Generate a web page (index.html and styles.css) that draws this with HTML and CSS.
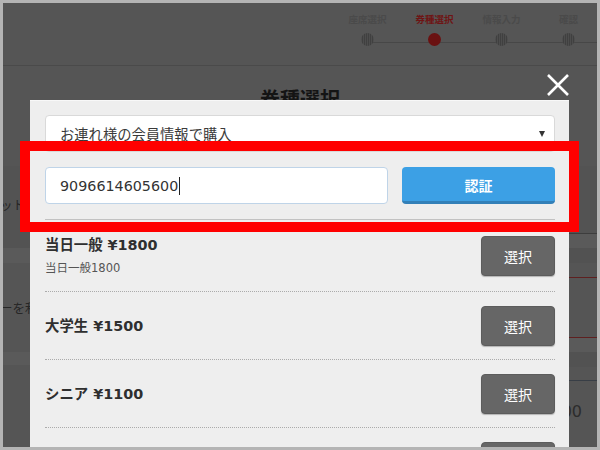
FILE: index.html
```html
<!DOCTYPE html>
<html lang="ja">
<head>
<meta charset="utf-8">
<title>券種選択</title>
<link rel="stylesheet" href="styles.css">
</head>
<body>
<div class="frame">
  <header class="steps-bar">
    <ol class="steps">
      <li class="step"><span class="step-label">座席選択</span><span class="dot"></span></li>
      <li class="step active"><span class="step-label">券種選択</span><span class="dot"></span></li>
      <li class="step"><span class="step-label">情報入力</span><span class="dot"></span></li>
      <li class="step"><span class="step-label">確認</span><span class="dot"></span></li>
    </ol>
  </header>
  <h1 class="page-title">券種選択</h1>
  <div class="page-body">
    <div class="col col-left">
      <div class="blk gap"></div>
      <div class="blk l-row1"><span class="bg-text">ットの選択</span></div>
      <div class="blk band-light l-band"></div>
      <div class="blk l-row2"><span class="bg-text">ーを利用</span></div>
      <div class="blk band-light l-band2"></div>
    </div>
    <div class="col col-right">
      <div class="blk gap"></div>
      <div class="blk r-a"></div>
      <div class="blk band-light r-b"></div>
      <div class="blk band-dark r-c"></div>
      <div class="blk r-d"></div>
      <div class="blk r-e"></div>
      <div class="blk band-light r-b"></div>
      <div class="blk band-dark r-c"></div>
      <div class="blk r-f"></div>
      <div class="blk r-g"><span class="bg-price">00</span></div>
    </div>
  </div>

  <div class="modal">
    <div class="select">
      <span>お連れ様の会員情報で購入</span>
      <span class="arrow"></span>
    </div>
    <div class="auth-row">
      <div class="input">9096614605600<span class="caret"></span></div>
      <button class="auth-btn">認証</button>
    </div>
    <div class="sep"></div>
    <ul class="tickets">
      <li class="ticket">
        <div class="ticket-info first">
          <div class="ticket-name">当日一般 ¥1800</div>
          <div class="ticket-desc">当日一般1800</div>
        </div>
        <button class="pick">選択</button>
      </li>
      <li class="ticket">
        <div class="ticket-info"><div class="ticket-name">大学生 ¥1500</div></div>
        <button class="pick">選択</button>
      </li>
      <li class="ticket">
        <div class="ticket-info"><div class="ticket-name">シニア ¥1100</div></div>
        <button class="pick">選択</button>
      </li>
      <li class="ticket">
        <div class="ticket-info"></div>
        <button class="pick" aria-label="選択"></button>
      </li>
    </ul>
  </div>

  <button class="close" aria-label="閉じる">
    <svg width="24" height="24" viewBox="0 0 24 24"><path d="M2 2 L22 22 M22 2 L2 22" stroke="#fff" stroke-width="2.6" fill="none"/></svg>
  </button>

  <div class="highlight"></div>
</div>
</body>
</html>
```

FILE: styles.css
```css
* { box-sizing: border-box; }
html, body { margin: 0; padding: 0; }
body {
  font-family: "Noto Sans CJK JP", sans-serif;
  background: #b4b4b4;
}
.frame {
  position: relative;
  width: 600px;
  height: 450px;
  border: 3px solid #b4b4b4;
  background: #555555;
  overflow: hidden;
}

/* steps header */
.steps-bar {
  height: 63px;
  border-bottom: 1px solid #4a4a4a;
}
.steps {
  list-style: none;
  margin: 0 -5px 0 0;
  padding: 0;
  display: flex;
  justify-content: flex-end;
}
.step {
  position: relative;
  width: 67px;
  display: flex;
  flex-direction: column;
  align-items: center;
  padding-top: 10px;
}
.step::before {
  content: "";
  position: absolute;
  left: 50%;
  top: 39px;
  width: 100%;
  height: 1px;
  background: #474747;
}
.step-label {
  font-size: 9.5px;
  line-height: 12px;
  font-weight: 700;
  color: #4a4a4a;
  white-space: nowrap;
}
.dot {
  position: relative;
  margin-top: 8px;
  width: 13px;
  height: 13px;
  border-radius: 50%;
  background: repeating-linear-gradient(90deg, #4d4d4d 0 1px, #404040 1px 2px);
}
.step.active .step-label { color: #6e1414; }
.step.active .dot { background: #6a1111; }

/* page behind overlay */
.page-title {
  margin: 21px 0 0;
  font-size: 20px;
  line-height: 24px;
  font-weight: 700;
  text-align: center;
  color: #141414;
}
.page-body {
  display: grid;
  grid-template-columns: 1fr 1fr;
}
.col { display: flex; flex-direction: column; }
.blk.gap { height: 55px; }
.band-light { background: #5a5a5a; }
.band-dark { background: #525252; }
.bg-text {
  display: block;
  margin-left: -3px;
  font-size: 12.5px;
  line-height: 18px;
  color: #262626;
  white-space: nowrap;
}
.l-row1 { height: 82px; padding-top: 30px; background: #535353; }
.l-band { height: 15px; }
.l-row2 { height: 89px; padding-top: 36px; }
.l-band2 { height: 13px; }

.r-a { height: 68px; background: #535353; border-bottom: 1px solid #3d3d3d; }
.r-b { height: 14px; }
.r-c { height: 15px; }
.r-d { height: 15px; border-bottom: 1px solid #5e2020; }
.r-e { height: 60px; border-bottom: 1px solid #5e2020; }
.r-f { height: 14px; border-bottom: 1px solid #383e46; }
.r-g { padding: 17px 15px 0 0; text-align: right; }
.bg-price {
  font-family: "DejaVu Sans", sans-serif;
  font-size: 16px;
  line-height: 18px;
  color: #2c2c2c;
}

/* modal */
.modal {
  position: absolute;
  left: 27px;
  top: 97px;
  width: 539px;
  height: 350px;
  background: #eeeeee;
  border-top: 1px solid #f8f8f8;
  padding: 14px 14px 0 15px;
  font-family: "DejaVu Sans", "Noto Sans CJK JP", sans-serif;
}
.select {
  height: 37px;
  background: #ffffff;
  border: 1px solid #d9d9d9;
  border-radius: 4px;
  display: flex;
  align-items: center;
  justify-content: space-between;
  padding: 0 9px 0 14px;
  font-family: "Noto Sans CJK JP", sans-serif;
  font-size: 14.3px;
  color: #3a3a3a;
}
.arrow {
  width: 0;
  height: 0;
  border-left: 3.5px solid transparent;
  border-right: 3.5px solid transparent;
  border-top: 6px solid #333;
}
.auth-row {
  margin-top: 15px;
  display: flex;
  gap: 14px;
}
.input {
  flex: 1;
  height: 37px;
  background: #fff;
  border: 1px solid #bfd4e8;
  border-radius: 4px;
  padding-left: 14px;
  display: flex;
  align-items: center;
  font-size: 14.3px;
  color: #333;
}
.caret {
  display: inline-block;
  width: 1px;
  height: 18px;
  background: #222;
  margin-left: 1px;
}
.auth-btn {
  width: 153px;
  height: 37px;
  border: none;
  border-bottom: 3px solid #3380b8;
  border-radius: 4px;
  background: #3ca0e5;
  color: #fff;
  font-family: "Noto Sans CJK JP", sans-serif;
  font-weight: 700;
  font-size: 14px;
  padding: 2px 0 0;
}
.sep {
  margin-top: 15px;
  height: 1px;
  background: #c2c2c2;
}
.tickets {
  list-style: none;
  margin: 0;
  padding: 0;
}
.ticket {
  display: flex;
  align-items: center;
  justify-content: space-between;
  padding: 14px 0 13px;
  border-bottom: 1px dotted #ababab;
}
.ticket-info.first { padding-bottom: 2px; }
.ticket-name {
  font-size: 14.4px;
  line-height: 22px;
  font-weight: 700;
  color: #2f2f2f;
}
.ticket-desc {
  margin-top: 4px;
  font-size: 11.5px;
  line-height: 16px;
  color: #555;
}
.pick {
  width: 74px;
  height: 40px;
  background: #666666;
  border: 1px solid #5c5c5c;
  border-radius: 4px;
  box-shadow: 0 1px 1px rgba(0,0,0,0.25);
  color: #fff;
  font-family: "Noto Sans CJK JP", sans-serif;
  font-size: 14px;
  padding: 0;
}

/* close button */
.close {
  position: absolute;
  left: 543px;
  top: 70px;
  width: 24px;
  height: 24px;
  padding: 0;
  border: none;
  background: transparent;
}
.close svg { display: block; }

/* annotation box */
.highlight {
  position: absolute;
  left: 17px;
  top: 138px;
  width: 559px;
  height: 91px;
  border: 10px solid #ff0000;
}
```
